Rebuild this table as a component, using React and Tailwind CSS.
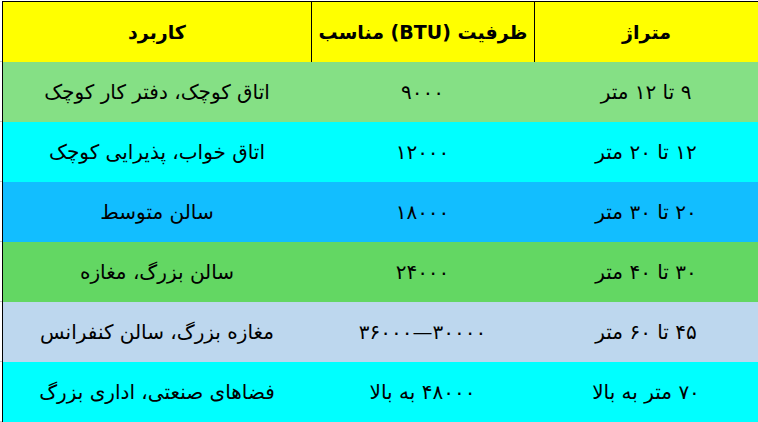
import React from "react";

const rows = [
  { bg: "bg-[#85e085]", a: "۹ تا ۱۲ متر", b: "۹۰۰۰", c: "اتاق کوچک، دفتر کار کوچک" },
  { bg: "bg-[#00ffff]", a: "۱۲ تا ۲۰ متر", b: "۱۲۰۰۰", c: "اتاق خواب، پذیرایی کوچک" },
  { bg: "bg-[#12beff]", a: "۲۰ تا ۳۰ متر", b: "۱۸۰۰۰", c: "سالن متوسط" },
  { bg: "bg-[#63d763]", a: "۳۰ تا ۴۰ متر", b: "۲۴۰۰۰", c: "سالن بزرگ، مغازه" },
  { bg: "bg-[#bdd7ee]", a: "۴۵ تا ۶۰ متر", b: "۳۰۰۰۰—۳۶۰۰۰", c: "مغازه بزرگ، سالن کنفرانس" },
  { bg: "bg-[#00ffff]", a: "۷۰ متر به بالا", b: "۴۸۰۰۰ به بالا", c: "فضاهای صنعتی، اداری بزرگ" },
];

export default function App() {
  return (
    <div
      className="w-[758px] h-[422px] bg-white overflow-hidden flex"
      style={{ fontFamily: '"DejaVu Sans", sans-serif' }}
    >
      <div className="w-[2px] flex flex-col pt-[2px]">
        <div className="h-[60px] border-b border-[#c8c8c8]" />
        {rows.map((r, i) => (
          <div key={i} className="h-[60px] border-b border-[#c8c8c8]" />
        ))}
      </div>
      <div className="flex-1 pt-[1px]">
        <div dir="rtl" className="w-[756px] border-t border-l border-black text-black">
          <div className="grid grid-cols-[224px_223px_308px] h-[60px] bg-[#ffff00] font-bold text-[19px]">
            <div className="border-l border-black flex items-center justify-center">متراژ</div>
            <div className="border-l border-black flex items-center justify-center">ظرفیت (BTU) مناسب</div>
            <div className="flex items-center justify-center">کاربرد</div>
          </div>
          {rows.map((r, i) => (
            <div key={i} className={`grid grid-cols-[224px_223px_308px] h-[60px] text-[20px] ${r.bg}`}>
              <div className="flex items-center justify-center">{r.a}</div>
              <div className="flex items-center justify-center">{r.b}</div>
              <div className="flex items-center justify-center">{r.c}</div>
            </div>
          ))}
        </div>
      </div>
    </div>
  );
}
